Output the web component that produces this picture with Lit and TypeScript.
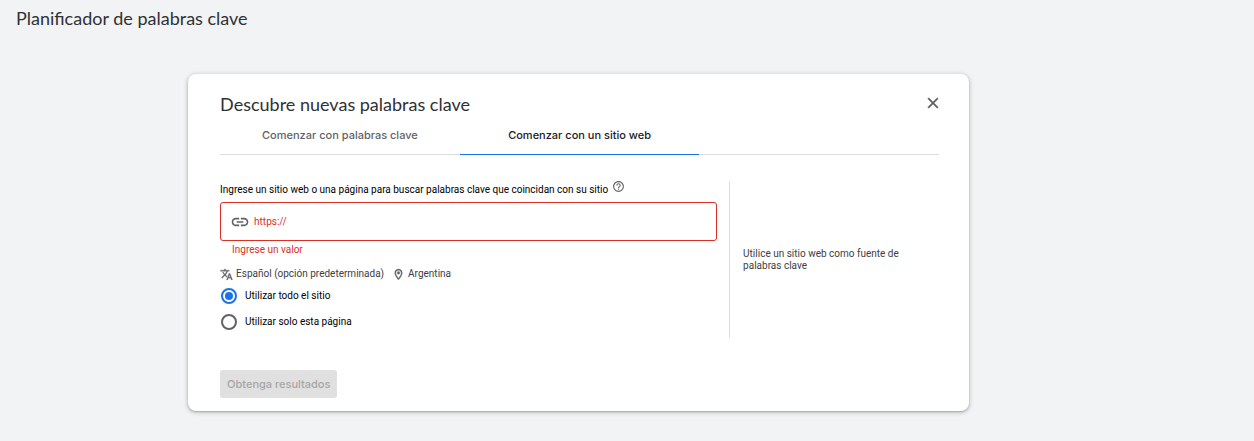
import { LitElement, html, css } from "lit";
import { customElement, state } from "lit/decorators.js";

type Scope = "site" | "page";

@customElement("app-root")
export class AppRoot extends LitElement {
  @state() private tab = 1;
  @state() private scope: Scope = "site";

  private readonly tabs = ["Comenzar con palabras clave", "Comenzar con un sitio web"];

  static styles = css`
    :host {
      display: block;
      box-sizing: border-box;
      min-height: 100vh;
      padding-bottom: 30px;
      background: #f1f3f4;
      color: #202124;
      font: 10px/14px Roboto, sans-serif;
    }
    *, *::before { box-sizing: border-box; }
    h1, h2, p { margin: 0; font-weight: 400; }
    h1, h2 { font-family: "Google Sans", "Product Sans", Lato, sans-serif; }
    .tab, .submit { font-family: "Google Sans", "Product Sans", Inter, sans-serif; }
    button { border: 0; background: none; padding: 0; margin: 0; cursor: pointer; }
    svg { display: block; fill: currentColor; flex: none; }
    .bold { stroke: currentColor; stroke-width: 0.6; }
    h1 { padding: 6px 16px; font-size: 18px; line-height: 24px; color: #303134; }
    h2 { font-size: 18px; line-height: 24px; color: #303134; }
    .card {
      width: 85%;
      max-width: 781px;
      margin: 38px 0 0 15%;
      padding: 18px 30px 13px 32px;
      background: #fff;
      border-radius: 8px;
      box-shadow: 0 1px 2px rgba(60, 64, 67, 0.3), 0 1px 4px 1px rgba(60, 64, 67, 0.2);
    }
    .head { display: flex; justify-content: space-between; align-items: flex-start; }
    .close { color: #5f6368; margin: 2px -3px 0 0; }
    .tabs {
      display: grid;
      grid-template-columns: repeat(3, 1fr);
      border-bottom: 1px solid #dadce0;
    }
    .tab {
      height: 39px;
      margin-bottom: -1px;
      padding-bottom: 1px;
      border-bottom: 1px solid transparent;
      font-size: 11px;
      font-weight: 500;
      color: #5f6368;
    }
    .tab[aria-selected="true"] { color: #202124; border-color: #1a73e8; }
    .body {
      display: grid;
      grid-template-columns: minmax(0, 1fr) 210px;
      gap: 12px;
      margin-top: 26px;
    }
    .label { display: flex; align-items: flex-end; gap: 4px; height: 16px; color: #000; }
    .help { color: #5f6368; padding-bottom: 4px; }
    .field {
      display: flex;
      align-items: center;
      gap: 4px;
      height: 39px;
      margin-top: 5px;
      padding: 0 9px;
      border: 1px solid #d93025;
      border-radius: 3px;
      color: #5f6368;
    }
    .field input {
      flex: 1;
      min-width: 0;
      padding: 0;
      border: 0;
      outline: 0;
      background: none;
      font: inherit;
      color: #d93025;
    }
    .field input::placeholder { color: #d93025; opacity: 1; }
    .error { padding: 2px 12px 0; color: #d93025; }
    .meta { display: flex; align-items: center; margin-top: 9px; color: #5f6368; height: 16px; }
    .meta span { margin: 0 8px 0 3px; color: #3c4043; }
    .option { display: flex; align-items: center; gap: 7px; height: 26px; color: #000; }
    .options { margin-top: 1px; }
    .option input {
      appearance: none;
      display: grid;
      place-items: center;
      width: 16px;
      height: 16px;
      margin: 0 1px;
      border: 2px solid #5f6368;
      border-radius: 50%;
    }
    .option input:checked { border-color: #1a73e8; }
    .option input:checked::before {
      content: "";
      width: 8px;
      height: 8px;
      border-radius: 50%;
      background: #1a73e8;
    }
    aside {
      display: flex;
      align-items: center;
      min-height: 157px;
      padding: 0 32px 0 13px;
      border-left: 1px solid #dadce0;
      line-height: 12px;
      color: #3c4043;
    }
    .submit {
      margin-top: 32px;
      height: 28px;
      padding: 0 7px;
      border-radius: 3px;
      background: #e0e0e0;
      color: #a6a6a6;
      font-size: 11px;
      font-weight: 500;
      cursor: default;
    }
  `;

  render() {
    return html`
      <h1>Planificador de palabras clave</h1>
      <section class="card" aria-labelledby="title">
        <header class="head">
          <h2 id="title">Descubre nuevas palabras clave</h2>
          <button class="close" aria-label="Cerrar">
            <svg class="bold" width="18" height="18" viewBox="0 0 24 24"><path d="M19 6.41 17.59 5 12 10.59 6.41 5 5 6.41 10.59 12 5 17.59 6.41 19 12 13.41 17.59 19 19 17.59 13.41 12z"/></svg>
          </button>
        </header>
        <div class="tabs" role="tablist">
          ${this.tabs.map((name, i) => html`
            <button class="tab" role="tab" aria-selected=${this.tab === i} @click=${() => (this.tab = i)}>${name}</button>
          `)}
        </div>
        <div class="body">
          <form>
            <div class="label">
              <label for="url">Ingrese un sitio web o una página para buscar palabras clave que coincidan con su sitio</label>
              <button class="help" type="button" aria-label="Ayuda">
                <svg width="13" height="13" viewBox="0 0 24 24"><path d="M11 18h2v-2h-2v2zm1-16C6.48 2 2 6.48 2 12s4.480 10 10 10 10-4.480 10-10S17.520 2 12 2zm0 18c-4.410 0-8-3.590-8-8s3.590-8 8-8 8 3.590 8 8-3.590 8-8 8zm0-14c-2.210 0-4 1.790-4 4h2c0-1.100.900-2 2-2s2 .900 2 2c0 2-3 1.750-3 5h2c0-2.250 3-2.500 3-5 0-2.210-1.790-4-4-4z"/></svg>
              </button>
            </div>
            <div class="field">
              <svg width="20" height="20" viewBox="0 0 24 24"><path d="M3.900 12c0-1.710 1.390-3.100 3.100-3.100h4V7H7c-2.760 0-5 2.240-5 5s2.240 5 5 5h4v-1.900H7c-1.710 0-3.100-1.390-3.100-3.100zM8 13h8v-2H8v2zm9-6h-4v1.900h4c1.710 0 3.100 1.390 3.100 3.100s-1.390 3.100-3.100 3.100h-4V17h4c2.760 0 5-2.240 5-5s-2.240-5-5-5z"/></svg>
              <input id="url" type="url" placeholder="https://" aria-invalid="true" aria-describedby="url-error" />
            </div>
            <p class="error" id="url-error">Ingrese un valor</p>
            <div class="meta">
              <svg class="bold" width="13" height="13" viewBox="0 0 24 24"><path d="m12.870 15.070-2.540-2.510.030-.030A17.520 17.520 0 0 0 14.070 6H17V4h-7V2H8v2H1v2h11.170C11.500 7.920 10.440 9.750 9 11.350 8.070 10.320 7.300 9.190 6.690 8h-2c.730 1.630 1.730 3.170 2.980 4.560l-5.090 5.020L4 19l5-5 3.110 3.110.760-2.040zM18.500 10h-2L12 22h2l1.120-3h4.750L21 22h2l-4.500-12zm-2.620 7 1.620-4.330L19.120 17h-3.240z"/></svg>
              <span>Español (opción predeterminada)</span>
              <svg class="bold" width="13" height="13" viewBox="0 0 24 24"><path d="M12 2C8.130 2 5 5.130 5 9c0 5.250 7 13 7 13s7-7.750 7-13c0-3.870-3.130-7-7-7zM7 9c0-2.760 2.240-5 5-5s5 2.240 5 5c0 2.880-2.880 7.190-5 9.880C9.920 16.210 7 11.850 7 9z"/><circle cx="12" cy="9" r="2.500"/></svg>
              <span>Argentina</span>
            </div>
            <div class="options" role="radiogroup">
              <label class="option">
                <input type="radio" name="scope" .checked=${this.scope === "site"} @change=${() => (this.scope = "site")} />
                Utilizar todo el sitio
              </label>
              <label class="option">
                <input type="radio" name="scope" .checked=${this.scope === "page"} @change=${() => (this.scope = "page")} />
                Utilizar solo esta página
              </label>
            </div>
          </form>
          <aside><p>Utilice un sitio web como fuente de palabras clave</p></aside>
        </div>
        <button class="submit" disabled>Obtenga resultados</button>
      </section>
    `;
  }
}
